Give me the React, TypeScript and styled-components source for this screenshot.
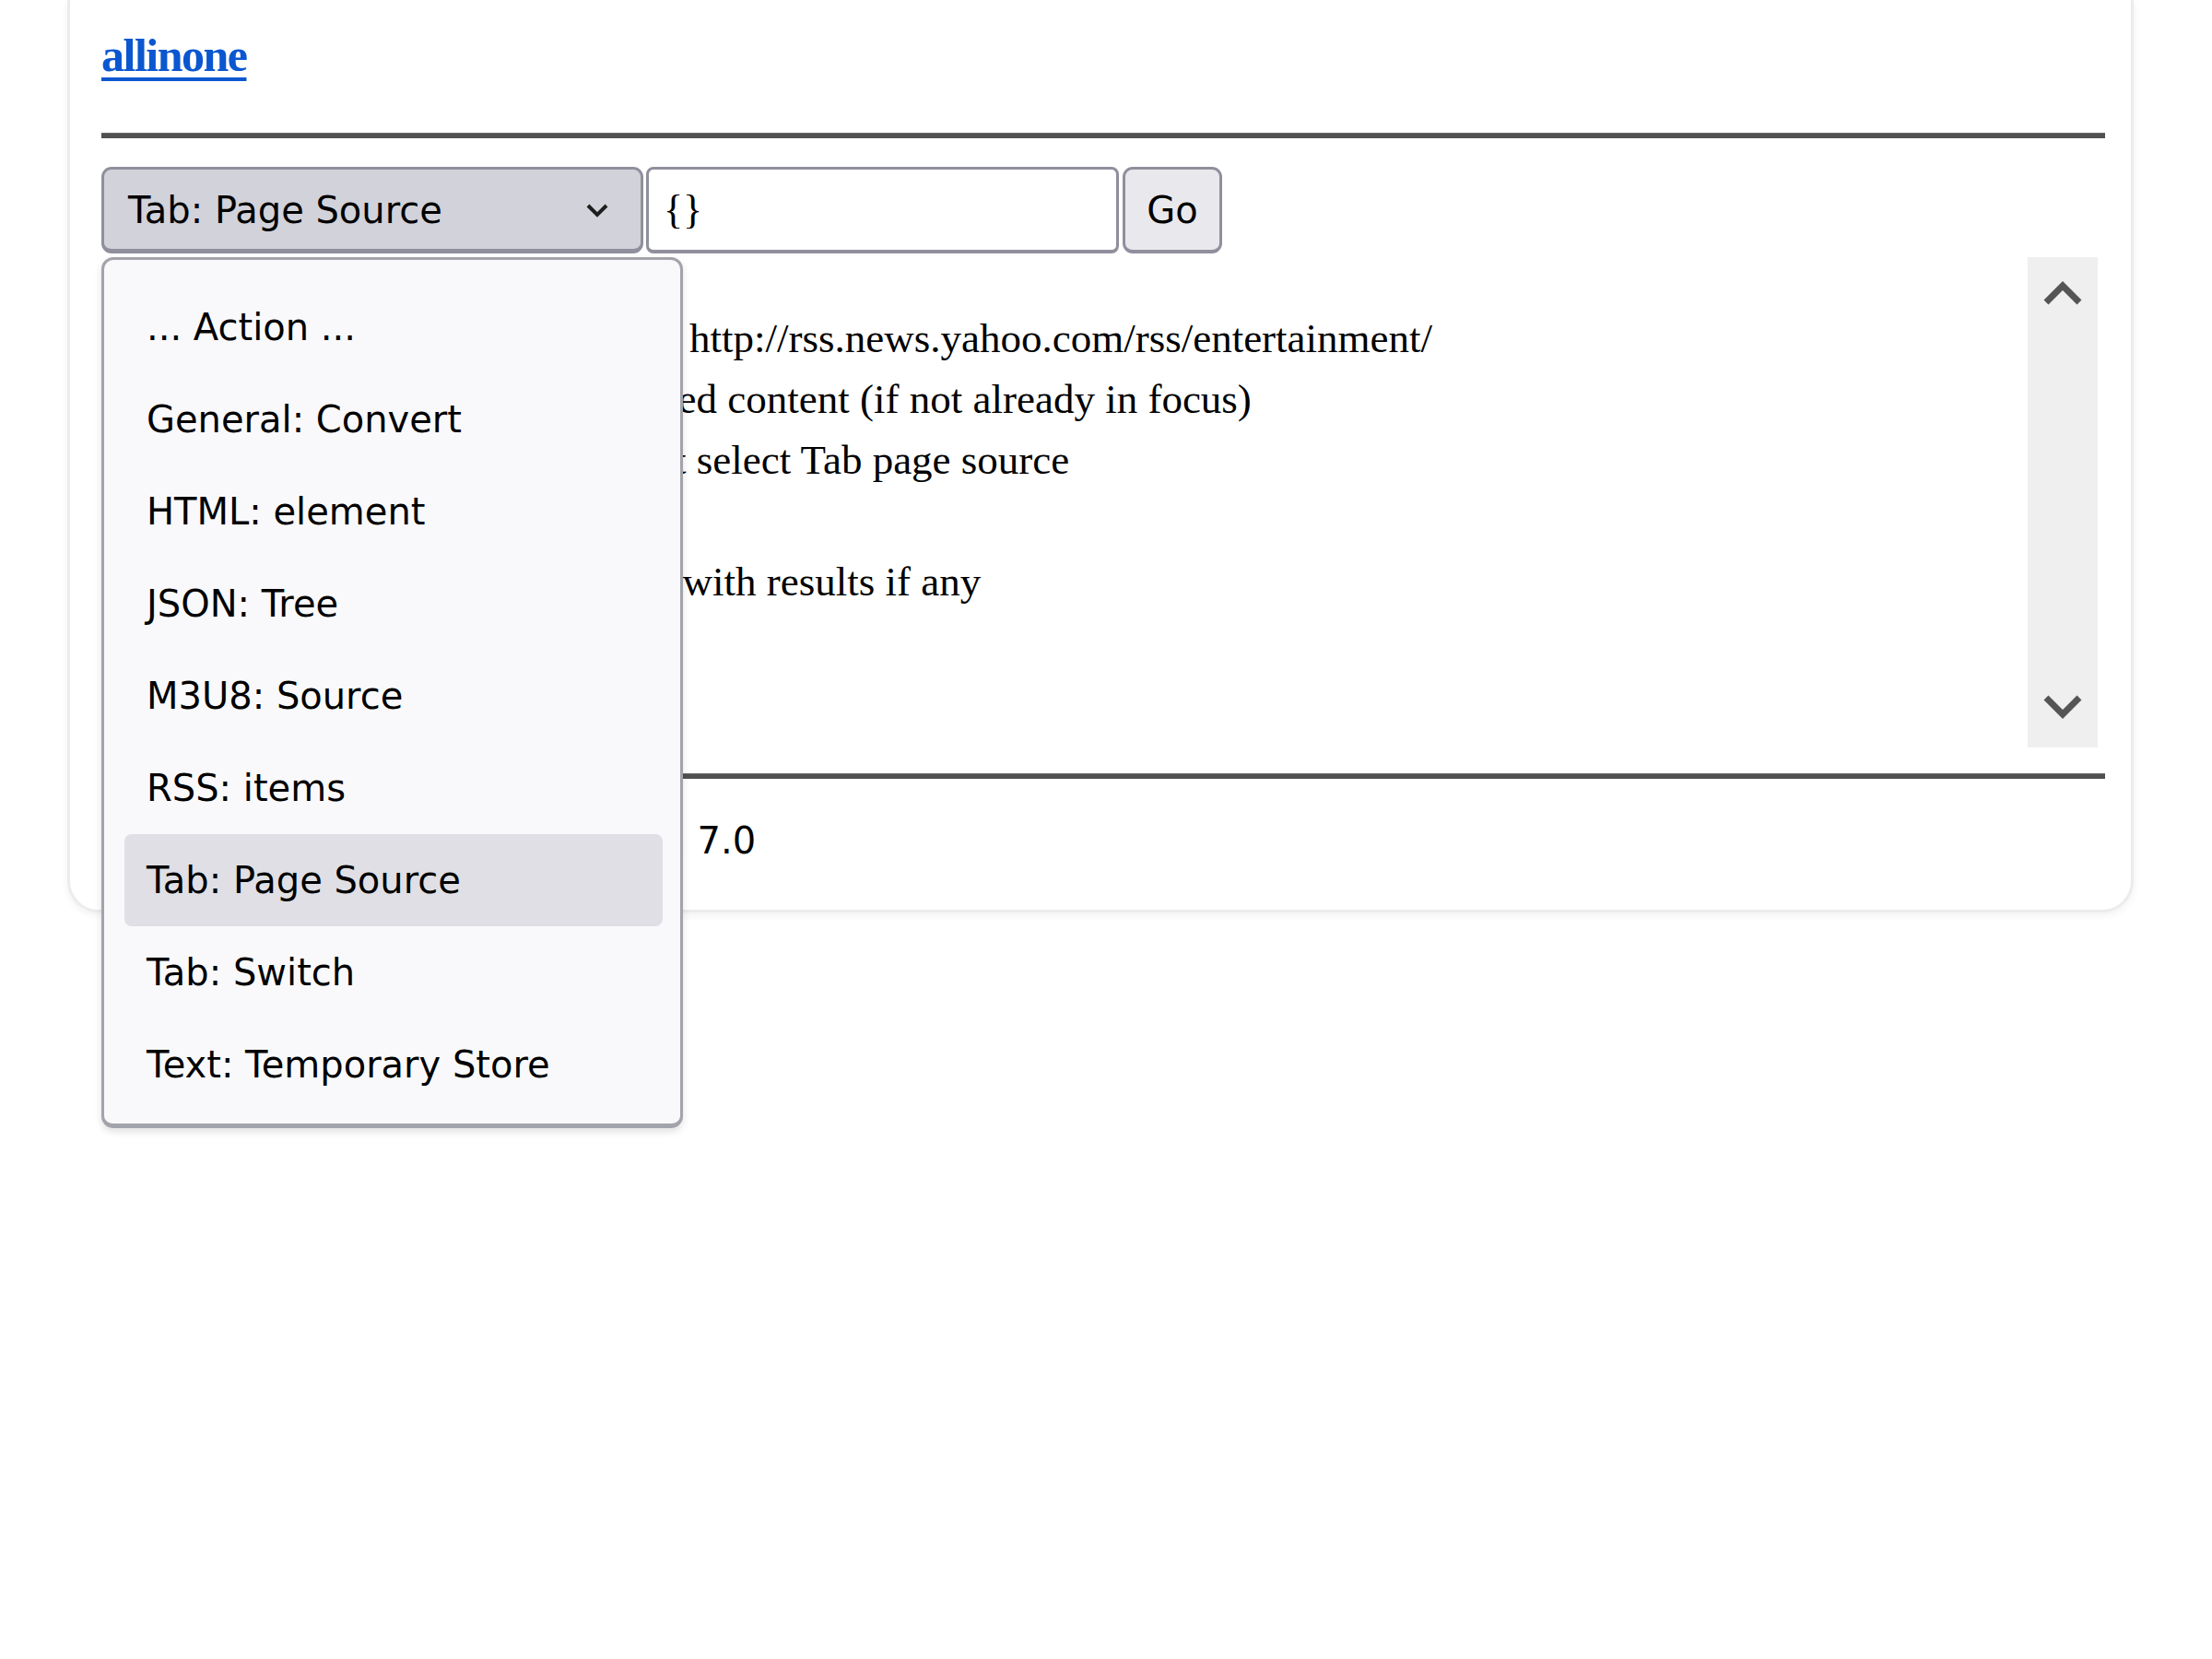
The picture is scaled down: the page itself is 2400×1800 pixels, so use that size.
import React from 'react';
import styled, { createGlobalStyle } from 'styled-components';

const GlobalStyle = createGlobalStyle`
  html, body {
    margin: 0;
    padding: 0;
    background: #ffffff;
  }
  body {
    font-family: "Liberation Serif", serif;
    color: #000;
  }
`;

const Page = styled.div`
  width: 2400px;
  min-height: 1800px;
  padding-left: 73px;
  box-sizing: border-box;
`;

const Card = styled.div`
  width: 2242px;
  box-sizing: border-box;
  background: #fff;
  border: 3px solid #ececee;
  border-top: none;
  border-radius: 0 0 34px 34px;
  box-shadow: 0 3px 8px rgba(0, 0, 0, 0.06);
  padding: 0 28px 0 34px;
  display: flex;
  flex-direction: column;
`;

const Header = styled.div`
  height: 120px;
  box-sizing: border-box;
  padding-top: 35px;
`;

const Brand = styled.a`
  font-family: "Liberation Serif", serif;
  font-weight: bold;
  font-size: 50px;
  line-height: 50px;
  color: #0b57d0;
  text-decoration: underline;
  text-decoration-thickness: 4px;
  text-underline-offset: 7px;
  letter-spacing: -1.5px;
`;

const Rule = styled.div<{ gap: number }>`
  margin-top: ${p => p.gap}px;
  height: 6px;
  background: #505050;
  border-top: 1px solid #6a6a6a;
  box-sizing: border-box;
`;

const Controls = styled.div`
  position: relative;
  margin-top: 31px;
  height: 94px;
  display: flex;
  gap: 3px;
  font-family: "DejaVu Sans", sans-serif;
  font-size: 40px;
`;

const SelectBox = styled.div`
  width: 588px;
  box-sizing: border-box;
  background: #d2d2da;
  border: 3px solid #8f8f9d;
  border-bottom-width: 5px;
  border-radius: 11px;
  display: flex;
  align-items: center;
  justify-content: space-between;
  padding: 2px 34px 0 26px;
`;

const TextInput = styled.div`
  width: 513px;
  box-sizing: border-box;
  background: #fff;
  border: 3px solid #8f8f9d;
  border-bottom-width: 4px;
  border-radius: 8px;
  display: flex;
  align-items: center;
  padding-left: 16px;
  font-family: "Liberation Serif", serif;
  font-size: 44px;
`;

const GoButton = styled.div`
  margin-left: 1px;
  width: 108px;
  box-sizing: border-box;
  background: #e9e9ed;
  border: 3px solid #8f8f9d;
  border-bottom-width: 4px;
  border-radius: 11px;
  display: flex;
  align-items: center;
  justify-content: center;
`;

const Menu = styled.div`
  position: absolute;
  top: 98px;
  left: 0;
  width: 631px;
  box-sizing: border-box;
  background: #f9f9fb;
  border: 3px solid #a3a3ab;
  border-bottom-width: 5px;
  border-radius: 13px;
  box-shadow: 0 4px 8px rgba(0, 0, 0, 0.12);
  padding: 23px 19px 14px 22px;
  z-index: 2;
`;

const MenuItem = styled.div<{ selected?: boolean }>`
  height: 100px;
  display: flex;
  align-items: center;
  padding-left: 24px;
  border-radius: 8px;
  background: ${p => (p.selected ? '#dfdfe5' : 'transparent')};
  white-space: nowrap;
`;

const Content = styled.div`
  margin-top: 4px;
  height: 532px;
  display: flex;
`;

const Notes = styled.div`
  flex: 1;
  padding: 55px 0 0 12px;
  font-family: "Liberation Serif", serif;
  font-size: 45px;
  line-height: 66px;
  white-space: pre;
  overflow: hidden;
`;

const Scrollbar = styled.div`
  width: 76px;
  margin-right: 8px;
  background: #efefef;
  display: flex;
  flex-direction: column;
  align-items: center;
  justify-content: space-between;
  padding: 25px 0 30px;
  box-sizing: border-box;
`;

const Footer = styled.div`
  height: 142px;
  box-sizing: border-box;
  padding: 45px 0 0 0;
  font-family: "DejaVu Sans", sans-serif;
  font-size: 40px;
  line-height: 44px;
  white-space: nowrap;
`;

const Chevron = ({ up, size }: { up?: boolean; size: 'small' | 'big' }) => {
  if (size === 'small') {
    return (
      <svg width="26" height="16" viewBox="0 0 26 16">
        <polyline points="3,3 13,13 23,3" fill="none" stroke="#1e1e1e" strokeWidth="4" />
      </svg>
    );
  }
  return (
    <svg width="44" height="28" viewBox="0 0 44 28">
      <polyline
        points={up ? '4,24 22,6 40,24' : '4,4 22,22 40,4'}
        fill="none"
        stroke="#555"
        strokeWidth="7"
      />
    </svg>
  );
};

const actions = [
  '... Action ...',
  'General: Convert',
  'HTML: element',
  'JSON: Tree',
  'M3U8: Source',
  'RSS: items',
  'Tab: Page Source',
  'Tab: Switch',
  'Text: Temporary Store',
];

const notes = [
  '1. Type in the RSS feed URL, e.g. http://rss.news.yahoo.com/rss/entertainment/',
  '2.  Click anywhere inside the loaded content (if not already in focus)',
  '3. From the actions drop-down list select Tab page source',
  '',
  '4. Run Go, the textarea gets filled with results if any',
];

export default function App() {
  return (
    <Page>
      <GlobalStyle />
      <Card>
        <Header>
          <Brand href="#">allinone</Brand>
        </Header>
        <Rule gap={24} />
        <Controls>
          <SelectBox>
            <span>Tab: Page Source</span>
            <Chevron size="small" />
          </SelectBox>
          <TextInput>{'{}'}</TextInput>
          <GoButton>Go</GoButton>
          <Menu>
            {actions.map(a => (
              <MenuItem key={a} selected={a === 'Tab: Page Source'}>
                {a}
              </MenuItem>
            ))}
          </Menu>
        </Controls>
        <Content>
          <Notes>{notes.join('\n')}</Notes>
          <Scrollbar>
            <Chevron up size="big" />
            <Chevron size="big" />
          </Scrollbar>
        </Content>
        <Rule gap={28} />
        <Footer>allinone tools extension version 7.0</Footer>
      </Card>
    </Page>
  );
}
